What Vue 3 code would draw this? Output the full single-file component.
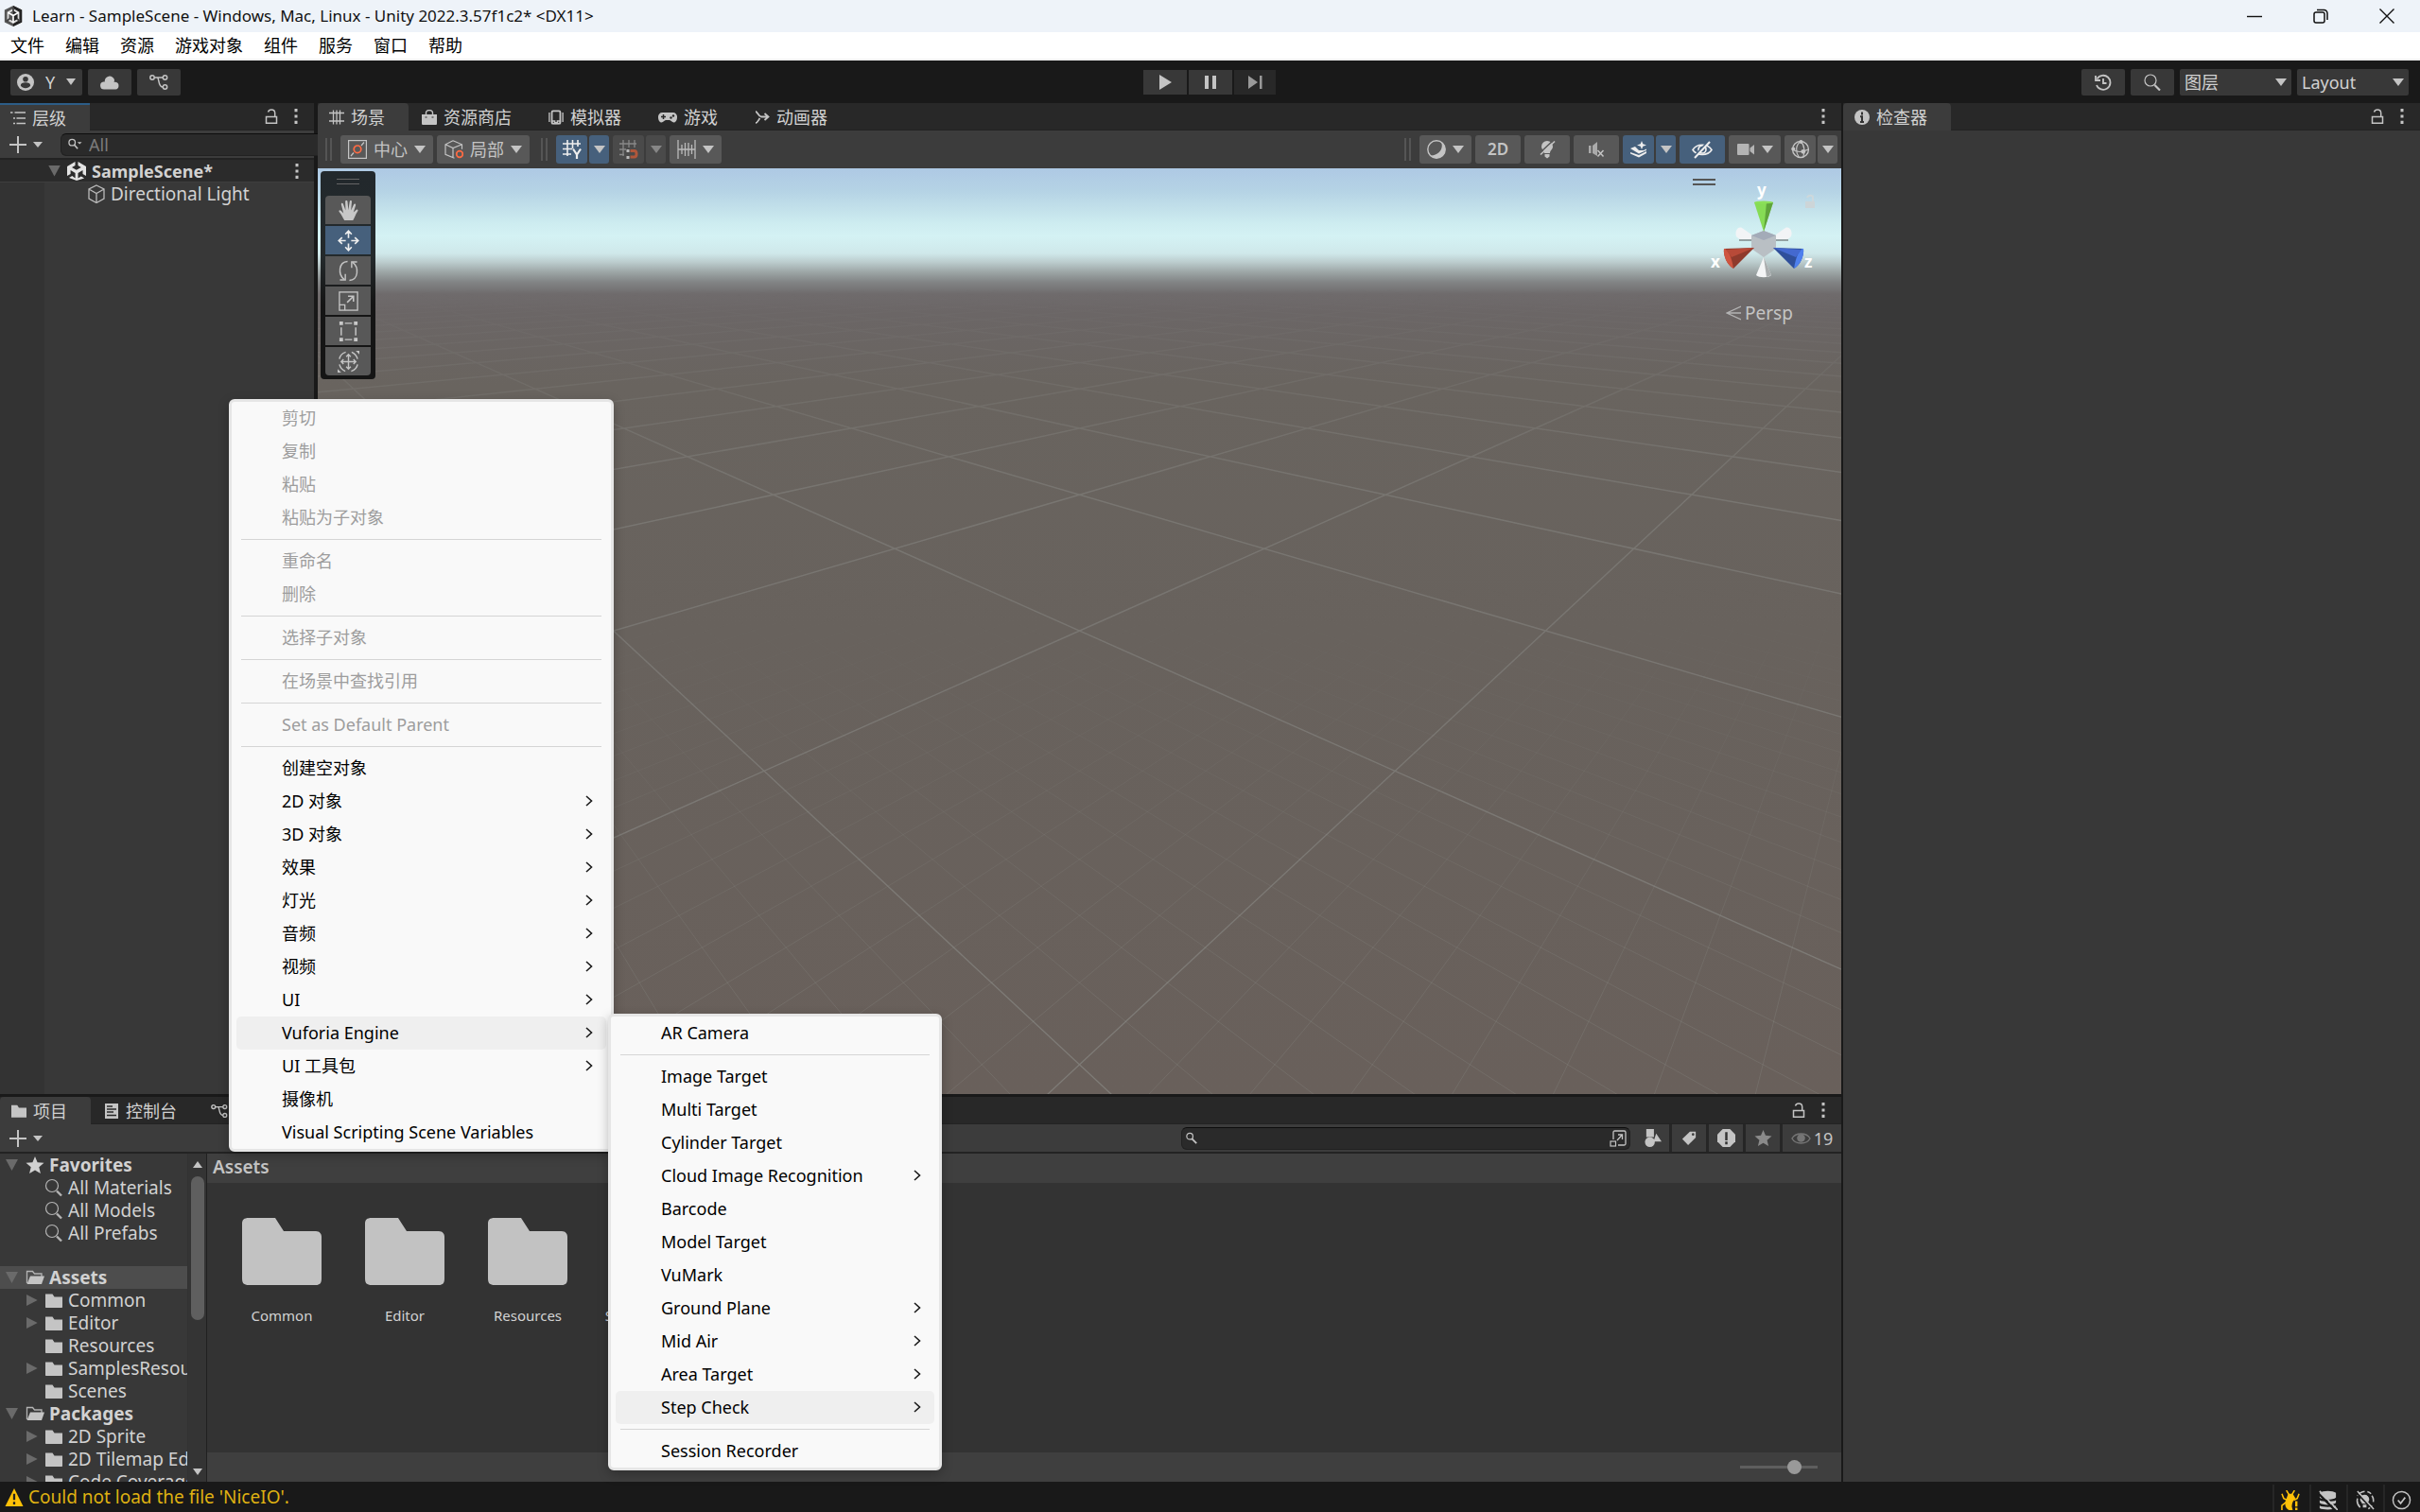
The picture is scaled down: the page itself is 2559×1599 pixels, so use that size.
<template>
  <div class="editor">
    <header class="titlebar">
      <svg class="logo" viewBox="0 0 20 24" v-html="icons.unityBadge"></svg>
      <h1>Learn - SampleScene - Windows, Mac, Linux - Unity 2022.3.57f1c2* &lt;DX11&gt;</h1>
      <div class="window-buttons">
        <button v-for="b in windowButtons" :key="b.icon" type="button" :aria-label="b.label">
          <svg viewBox="0 0 16 16" v-html="icons[b.icon]"></svg>
        </button>
      </div>
    </header>

    <nav class="menubar">
      <button v-for="m in mainMenu" :key="m" type="button">{{ m }}</button>
    </nav>

    <div class="app-toolbar">
      <div class="group">
        <button type="button" class="dark-btn account">
          <svg viewBox="0 0 18 18" v-html="icons.account"></svg>
          <span>Y</span>
          <i class="caret"></i>
        </button>
        <button type="button" class="dark-btn" aria-label="Cloud">
          <svg class="wide" viewBox="0 0 20 16" v-html="icons.cloud"></svg>
        </button>
        <button type="button" class="dark-btn" aria-label="Version control">
          <svg class="wide" viewBox="0 0 20 18" v-html="icons.branch"></svg>
        </button>
      </div>
      <div class="group play">
        <button type="button" aria-label="Play"><svg viewBox="0 0 16 16" v-html="icons.play"></svg></button>
        <button type="button" aria-label="Pause"><svg viewBox="0 0 16 16" v-html="icons.pause"></svg></button>
        <button type="button" class="off" aria-label="Step"><svg viewBox="0 0 16 16" v-html="icons.step"></svg></button>
      </div>
      <div class="group right">
        <button type="button" class="dark-btn" aria-label="History">
          <svg viewBox="0 0 18 18" v-html="icons.history"></svg>
        </button>
        <button type="button" class="dark-btn" aria-label="Search">
          <svg viewBox="0 0 18 18" v-html="icons.search"></svg>
        </button>
        <label class="select">
          <select aria-label="Layers"><option>图层</option></select>
          <i class="caret"></i>
        </label>
        <label class="select">
          <select aria-label="Layout"><option>Layout</option></select>
          <i class="caret"></i>
        </label>
      </div>
    </div>

    <main class="docks">
      <div class="workspace">
        <div class="upper">
          <section class="panel hierarchy">
            <div class="tabs">
              <button type="button" class="tab active focused">
                <svg viewBox="0 0 16 16" v-html="icons.list"></svg>层级
              </button>
              <span class="spacer"></span>
              <svg class="lock" viewBox="0 0 14 16" v-html="icons.lock"></svg>
              <svg class="dots" viewBox="0 0 4 16" v-html="icons.dots"></svg>
            </div>
            <div class="bar">
              <button type="button" class="add" aria-label="Create">
                <svg viewBox="0 0 18 18" v-html="icons.plus"></svg><i class="caret small"></i>
              </button>
              <div class="search">
                <svg viewBox="0 0 16 16" v-html="icons.searchMenu"></svg>
                <input type="text" placeholder="All" aria-label="Search hierarchy" />
                <svg class="popout" viewBox="0 0 18 18" v-html="icons.popout"></svg>
              </div>
            </div>
            <div class="scene-row">
              <i class="fold open"></i>
              <svg viewBox="0 0 20 20" v-html="icons.unity"></svg>
              <strong>SampleScene*</strong>
              <span class="spacer"></span>
              <svg class="dots" viewBox="0 0 4 16" v-html="icons.dots"></svg>
            </div>
            <div class="objects">
              <div class="object-row">
                <svg viewBox="0 0 20 20" v-html="icons.cube"></svg>Directional Light
              </div>
            </div>
          </section>

          <section class="panel scene">
            <div class="tabs">
              <button
                v-for="t in sceneTabs"
                :key="t.label"
                type="button"
                class="tab"
                :class="{ active: t.active }"
              >
                <svg :class="{ wide: t.wide }" :viewBox="t.box || '0 0 16 16'" v-html="icons[t.icon]"></svg>{{ t.label }}
              </button>
              <span class="spacer"></span>
              <svg class="dots" viewBox="0 0 4 16" v-html="icons.dots"></svg>
            </div>

            <div class="scene-bar">
              <i class="grip"></i>
              <button type="button" class="btn">
                <svg viewBox="0 0 20 20" v-html="icons.pivot"></svg>中心<i class="caret"></i>
              </button>
              <button type="button" class="btn">
                <svg viewBox="0 0 20 20" v-html="icons.local"></svg>局部<i class="caret"></i>
              </button>
              <i class="grip second"></i>
              <div class="split on">
                <button type="button" aria-label="Grid"><svg viewBox="0 0 20 20" v-html="icons.gridY"></svg></button>
                <button type="button" class="drop" aria-label="Grid options"><i class="caret"></i></button>
              </div>
              <div class="split disabled">
                <button type="button" aria-label="Snap"><svg viewBox="0 0 20 20" v-html="icons.snap"></svg></button>
                <button type="button" class="drop" aria-label="Snap options"><i class="caret"></i></button>
              </div>
              <button type="button" class="btn" aria-label="Increment">
                <svg viewBox="0 0 20 20" v-html="icons.ruler"></svg><i class="caret"></i>
              </button>
              <span class="spacer"></span>
              <i class="grip"></i>
              <button type="button" class="btn" aria-label="Shading">
                <svg viewBox="0 0 20 20" v-html="icons.shading"></svg><i class="caret"></i>
              </button>
              <button type="button" class="btn toggle two-d">2D</button>
              <button type="button" class="btn toggle" aria-label="Lighting">
                <svg viewBox="0 0 20 20" v-html="icons.bulb"></svg>
              </button>
              <button type="button" class="btn toggle" aria-label="Audio">
                <svg viewBox="0 0 20 20" v-html="icons.audio"></svg>
              </button>
              <div class="split on">
                <button type="button" aria-label="Effects"><svg viewBox="0 0 20 20" v-html="icons.effects"></svg></button>
                <button type="button" class="drop" aria-label="Effect options"><i class="caret"></i></button>
              </div>
              <button type="button" class="btn toggle on" aria-label="Visibility">
                <svg class="eye" viewBox="0 0 22 20" v-html="icons.eyeOff"></svg>
              </button>
              <button type="button" class="btn" aria-label="Camera">
                <svg viewBox="0 0 20 20" v-html="icons.camera"></svg><i class="caret"></i>
              </button>
              <div class="split">
                <button type="button" aria-label="Gizmos"><svg viewBox="0 0 22 22" v-html="icons.gizmo"></svg></button>
                <button type="button" class="drop" aria-label="Gizmo options"><i class="caret"></i></button>
              </div>
            </div>

            <div class="viewport">
              <svg class="floor" viewBox="0 0 1611 979" preserveAspectRatio="xMidYMid slice">
                <defs>
                  <linearGradient id="far" x1="0" y1="0" x2="0" y2="1">
                    <stop offset="0.13" stop-color="#000" />
                    <stop offset="0.22" stop-color="#666" />
                    <stop offset="0.36" stop-color="#fff" />
                  </linearGradient>
                  <linearGradient id="near" x1="0" y1="0" x2="0" y2="1">
                    <stop offset="0.45" stop-color="#000" />
                    <stop offset="0.9" stop-color="#fff" />
                  </linearGradient>
                  <mask id="fade-far"><rect width="1611" height="979" fill="url(#far)" /></mask>
                  <mask id="fade-near"><rect width="1611" height="979" fill="url(#near)" /></mask>
                </defs>
                <path class="major" :d="majorGrid" mask="url(#fade-far)" />
                <path class="minor" :d="minorGrid" mask="url(#fade-near)" />
              </svg>

              <div class="tools">
                <i class="handle"></i>
                <button
                  v-for="t in tools"
                  :key="t"
                  type="button"
                  :class="{ on: t === 'move' }"
                  :aria-label="t"
                >
                  <svg viewBox="0 0 24 24" v-html="icons[t]"></svg>
                </button>
              </div>

              <div class="orientation">
                <i class="handle"></i>
                <svg viewBox="0 0 140 120" v-html="icons.axes"></svg>
                <p>
                  <svg viewBox="0 0 16 16" v-html="icons.persp"></svg>Persp
                </p>
              </div>
            </div>
          </section>
        </div>

        <section class="panel project">
          <div class="tabs">
            <button type="button" class="tab active">
              <svg viewBox="0 0 18 16" v-html="icons.folder"></svg>项目
            </button>
            <button type="button" class="tab">
              <svg viewBox="0 0 16 16" v-html="icons.console"></svg>控制台
            </button>
            <button type="button" class="tab graph" aria-label="Graph">
              <svg class="wide" viewBox="0 0 20 18" v-html="icons.branch"></svg>
            </button>
            <span class="spacer"></span>
            <svg class="lock" viewBox="0 0 14 16" v-html="icons.lock"></svg>
            <svg class="dots" viewBox="0 0 4 16" v-html="icons.dots"></svg>
          </div>
          <div class="bar">
            <button type="button" class="add" aria-label="Create">
              <svg viewBox="0 0 18 18" v-html="icons.plus"></svg><i class="caret small"></i>
            </button>
            <span class="spacer"></span>
            <div class="search asset-search">
              <svg viewBox="0 0 16 16" v-html="icons.searchSmall"></svg>
              <input type="text" aria-label="Search assets" />
              <svg class="popout" viewBox="0 0 18 18" v-html="icons.popout"></svg>
            </div>
            <div class="filters">
              <button v-for="f in filters" :key="f" type="button" :class="{ dim: f === 'star' }" :aria-label="f">
                <svg viewBox="0 0 20 20" v-html="icons[f]"></svg>
              </button>
              <button type="button" class="hidden-count">
                <svg viewBox="0 0 22 16" v-html="icons.eye"></svg>19
              </button>
            </div>
          </div>

          <div class="browser">
            <ul class="tree">
              <li
                v-for="(n, i) in tree"
                :key="i"
                :class="{ child: n.child, selected: n.selected, gap: n.gap }"
              >
                <i class="fold" :class="n.fold"></i>
                <svg viewBox="0 0 20 20" v-html="icons[n.icon]"></svg>
                <span>{{ n.name }}</span>
              </li>
            </ul>
            <div class="scrollbar">
              <i class="up"></i>
              <i class="thumb"></i>
              <i class="down"></i>
            </div>
            <div class="assets">
              <div class="crumb">Assets</div>
              <div class="tiles">
                <figure v-for="f in folders" :key="f">
                  <svg viewBox="0 0 84 71" v-html="icons.bigFolder"></svg>
                  <figcaption>{{ f }}</figcaption>
                </figure>
              </div>
              <div class="zoom">
                <input type="range" min="0" max="100" value="74" aria-label="Icon size" />
              </div>
            </div>
          </div>
        </section>
      </div>

      <section class="panel inspector">
        <div class="tabs">
          <button type="button" class="tab active">
            <svg viewBox="0 0 16 16" v-html="icons.info"></svg>检查器
          </button>
          <span class="spacer"></span>
          <svg class="lock" viewBox="0 0 14 16" v-html="icons.lock"></svg>
          <svg class="dots" viewBox="0 0 4 16" v-html="icons.dots"></svg>
        </div>
      </section>
    </main>

    <footer class="status">
      <svg class="warn" viewBox="0 0 20 20" v-html="icons.warning"></svg>
      <span>Could not load the file 'NiceIO'.</span>
      <div class="status-icons">
        <button v-for="s in statusIcons" :key="s" type="button" :aria-label="s">
          <svg viewBox="0 0 22 22" v-html="icons[s]"></svg>
        </button>
      </div>
    </footer>

    <div class="menu context">
      <template v-for="(m, i) in contextMenu" :key="i">
        <hr v-if="m === '-'" />
        <button v-else type="button" :disabled="m.disabled" :class="{ hover: m.hover }">
          {{ m.label }}
          <svg v-if="m.sub" viewBox="0 0 8 12" v-html="icons.chevron"></svg>
        </button>
      </template>
    </div>

    <div class="menu submenu">
      <template v-for="(m, i) in vuforiaMenu" :key="i">
        <hr v-if="m === '-'" />
        <button v-else type="button" :class="{ hover: m.hover }">
          {{ m.label }}
          <svg v-if="m.sub" viewBox="0 0 8 12" v-html="icons.chevron"></svg>
        </button>
      </template>
    </div>
  </div>
</template>

<script setup>
const icons = {
  unityBadge:
    '<path d="M10 0 20 5v14l-10 5L0 19V5z" fill="#555"/><path d="M10 0 20 5v14l-10 5z" fill="#222"/><path d="M10 4.500 16 8v8l-6 3.500L4 16V8z" fill="none" stroke="#ddd" stroke-width="2"/><path d="M4 8l6 3.500L16 8M10 11.500v8" stroke="#fff" stroke-width="1.800" fill="none"/><path d="M10 2v5M2 18l4-3M18 18l-4-3" stroke="#444" stroke-width="2"/>',
  minimize: '<path d="M0 8.500h16" stroke="#111" stroke-width="1.400"/>',
  restore:
    '<rect x="1" y="4" width="11" height="11" rx="2" fill="none" stroke="#111" stroke-width="1.500"/><path d="M4 1.500h7.500a3.500 3.500 0 0 1 3.500 3.500v7" fill="none" stroke="#111" stroke-width="1.500"/>',
  close: '<path d="M.5.5l15 15M15.500.5l-15 15" stroke="#111" stroke-width="1.400"/>',
  account:
    '<circle cx="9" cy="9" r="9" fill="#c4c4c4"/><circle cx="9" cy="5.800" r="2.800" fill="#383838"/><path d="M3.800 12.500c0-2.500 2-3.200 5.200-3.200s5.200.7 5.200 3.200c-1.200 1.800-3 2.800-5.200 2.800s-4-1-5.200-2.800z" fill="#383838"/>',
  cloud:
    '<path d="M4 15.500a4 4 0 0 1-.8-7.900h1.600A5.200 5.200 0 0 1 15 5.600c0 .9-.2 1.600-.5 2.200h1.700a3.900 3.900 0 0 1 0 7.700z" fill="#c4c4c4"/>',
  branch:
    '<g fill="none" stroke="#c4c4c4" stroke-width="1.500"><circle cx="3" cy="4" r="2.200"/><circle cx="16.500" cy="4" r="2.200"/><circle cx="16.500" cy="14" r="2.200"/><path d="M5.200 4h9M8.500 4c2 1 .5 10 5.800 10"/></g>',
  play: '<path d="M2 0v16l13-8z" fill="#c4c4c4"/>',
  pause: '<path d="M2 1h4v14H2zM10 1h4v14h-4z" fill="#c4c4c4"/>',
  step: '<path d="M1 1v14l10-7zM13 1h2.500v14H13z" fill="#999"/>',
  history:
    '<path d="M2.500 5.500A7.500 7.500 0 1 1 2 12" fill="none" stroke="#c4c4c4" stroke-width="1.800"/><path d="M1 2v5h5" fill="none" stroke="#c4c4c4" stroke-width="1.800"/><path d="M9 5v5h3.500" fill="none" stroke="#c4c4c4" stroke-width="1.800"/>',
  search:
    '<circle cx="7" cy="7" r="6" fill="none" stroke="#c4c4c4" stroke-width="1.200"/><path d="M11.500 12l5.500 5.500" stroke="#c4c4c4" stroke-width="2.200"/>',
  searchSmall:
    '<circle cx="5.500" cy="6" r="3.500" fill="none" stroke="#c4c4c4" stroke-width="1.300"/><path d="M8 9l5 5" stroke="#c4c4c4" stroke-width="2"/>',
  searchMenu:
    '<circle cx="4.500" cy="6" r="3.500" fill="none" stroke="#c4c4c4" stroke-width="1.400"/><path d="M6.800 8.500l4 4.500" stroke="#c4c4c4" stroke-width="1.700"/><path d="M10.500 5.500h5l-2.500 2.600z" fill="#c4c4c4"/>',
  popout:
    '<path d="M4 10V2.500C4 1.500 4.500 1 5.500 1h10c1 0 1.500.5 1.500 1.500v12c0 1-.5 1.500-1.500 1.500H9" fill="none" stroke="#c4c4c4" stroke-width="1.300"/><rect x="1" y="12" width="5.500" height="5" fill="none" stroke="#c4c4c4" stroke-width="1.200"/><path d="M8 11l5-5.500M9 5h4.500v5" fill="none" stroke="#c4c4c4" stroke-width="1.300"/>',
  list: '<path d="M0 2h2.500M4.500 2H16M3 8h2M6.500 8H16M3 13.500h2M6.500 13.500H16" stroke="#c4c4c4" stroke-width="1.500"/>',
  lock: '<path d="M1.500 8.500h11v6.700h-11z" fill="none" stroke="#c4c4c4" stroke-width="1.500"/><path d="M3.500 3.500C4 1.700 5.200 1 7 1c2.400 0 3.700 1.200 3.700 3.500v4" fill="none" stroke="#c4c4c4" stroke-width="1.500"/>',
  dots: '<path d="M.5 0h3v3.200h-3zM.5 6.400h3v3.200h-3zM.5 12.800h3V16h-3z" fill="#c4c4c4"/>',
  plus: '<path d="M9 0v18M0 9h18" stroke="#c4c4c4" stroke-width="2"/>',
  unity:
    '<path d="M8.500 0v4L5 6l4.800 2.800L14.800 6 11.500 4V0L20 5v10l-3.500-2V9l-5 3v5.500l3.300-2 3.300 2L10 20l-8-3 3.300-2 3.300 2.500V12l-5-3v4L0 15V5z" fill="#e4e4e4"/>',
  cube: '<path d="M10 1l8 4v10l-8 4.500L2 15V5zM2 5l8 4.500L18 5M10 9.500v10" fill="none" stroke="#bbb" stroke-width="1.300"/>',
  hash: '<path d="M4.500.5v15M11.500.5v15M8 .5v15M0 3.500h16M0 12h16" stroke="#c4c4c4" stroke-width="1.300"/>',
  bag: '<path d="M0 5h16v9.500c0 1-.5 1.500-1.500 1.500h-13C.5 16 0 15.500 0 14.500z" fill="#c4c4c4"/><path d="M4.500 8V3.500C4.500 1.500 6 .6 8 .6s3.500.9 3.500 2.900V8" fill="none" stroke="#c4c4c4" stroke-width="1.400"/><path d="M3.500 8h2M10.500 8h2" stroke="#282828" stroke-width="1"/>',
  phone:
    '<rect x="5" y="1" width="10" height="15" rx="1.500" fill="none" stroke="#c4c4c4" stroke-width="2"/><path d="M5 13h3.500v2h3v-2H15v3H5zM2 3v11M18 3v11" stroke="#c4c4c4" stroke-width="1.500" fill="none"/>',
  pad: '<path d="M4.500 3h11A4.500 4.500 0 0 1 20 8c0 3-1.500 5.500-3.500 5.500S13.500 11 12 11H8c-1.500 0-2.500 2.500-4.500 2.500S0 11 0 8a4.500 4.500 0 0 1 4.500-5z" fill="#c4c4c4"/><path d="M5.500 5v5M3 7.500h5" stroke="#282828" stroke-width="1.500"/><circle cx="13.500" cy="8.500" r="1.200" fill="#282828"/><circle cx="16" cy="6.500" r="1.200" fill="#282828"/>',
  animator:
    '<path d="M1 2c2 0 3 5.500 6 5.500h7M1 14c2 0 3-3 4.500-5M10.500 4l4 3.500-4 3.500" fill="none" stroke="#c4c4c4" stroke-width="1.800"/>',
  pivot:
    '<rect x=".6" y=".6" width="18.800" height="18.800" fill="none" stroke="#c4c4c4" stroke-width="1.200"/><path d="M3 17l3-3.500M14 6l3-3.500" stroke="#c4c4c4" stroke-width="1.200"/><circle cx="10" cy="9.800" r="3.800" fill="none" stroke="#ff6b43" stroke-width="1.700"/>',
  local:
    '<path d="M9 .8l9.500 4v5M18.500 4.800L9 8.500 1 4.800M9 .8L1 4.800v10.500l9.500 4M9 8.500v10" fill="none" stroke="#c4c4c4" stroke-width="1.200"/><circle cx="16" cy="15" r="3.300" fill="none" stroke="#ff6b43" stroke-width="1.700"/>',
  gridY:
    '<path d="M5 0v17M10.500 0v9M16 0v7M0 4h19M0 9.500h10M0 15h9" stroke="#eee" stroke-width="1.600"/><path d="M11 9.500l4 6 4-6M15 15v5.500" fill="none" stroke="#eee" stroke-width="2.200"/>',
  snap: '<path d="M4 0v17M10 0v8M16 0v8M0 4h18M0 10h7M0 15.500h5" stroke="#888" stroke-width="1.300"/><path d="M11.500 11.500h4.300c3 0 3 6.500 0 6.500h-4.300" fill="none" stroke="#b0573b" stroke-width="3"/><path d="M7.500 10h3v3h-3zM7.500 17h3v3h-3z" fill="#bbb"/>',
  ruler:
    '<path d="M1 0v20M5 5v10M8.500 3v14M12 3v14M15.500 5v10M19 0v20M1 10h18" stroke="#bbb" stroke-width="1.300"/>',
  shading:
    '<circle cx="10" cy="10" r="9.200" fill="none" stroke="#c4c4c4" stroke-width="1.400"/><path d="M15 2.500C18 9 12 17 3.500 16.500A9.300 9.300 0 0 0 19.300 10 9.300 9.300 0 0 0 15 2.500z" fill="#c4c4c4"/>',
  bulb: '<path d="M10 1a6 6 0 0 1 6 6c0 3-3 4-3 7H7c0-3-3-4-3-7a6 6 0 0 1 6-6zM7.500 15h5v2.500L10 19.500l-2.500-2z" fill="#c4c4c4"/><path d="M2 14L17 0" stroke="#585858" stroke-width="1.600"/><path d="M3 15.500L18 1.500" stroke="#c4c4c4" stroke-width="1.600"/>',
  audio:
    '<path d="M2 6h2.500v8H2zM6 6l5-4v15l-5-3z" fill="#aaa"/><path d="M11.500 11l6 6.500M17.500 11l-6 6.500" stroke="#c4c4c4" stroke-width="1.500"/>',
  effects:
    '<path d="M13 1l1.300 3.200L18 5.500l-3.700 1.300L13 10l-1.300-3.200L8 5.500l3.700-1.300zM1 9l5-2 4 4 5 0 3-1.500v1.500l-8 3.500zM1 13l9 3 8-4v2l-8 4.500-9-4z" fill="#eee"/>',
  eyeOff:
    '<path d="M1 10.500C5 3.500 17 3.500 21 10.500 17 17 5 17 1 10.500z" fill="none" stroke="#eee" stroke-width="1.600"/><circle cx="11" cy="10" r="4" fill="none" stroke="#eee" stroke-width="1.700"/><path d="M2 18L18 1" stroke="#46607c" stroke-width="2"/><path d="M3 19L19 2" stroke="#eee" stroke-width="2"/>',
  camera: '<rect x="1" y="4" width="12.500" height="12" rx="1" fill="#b4b4b4"/><path d="M14.500 8.500L19 5v10.500l-4.500-3.500z" fill="#b4b4b4"/>',
  gizmo:
    '<circle cx="11" cy="11" r="9.300" fill="none" stroke="#c4c4c4" stroke-width="1.500"/><path d="M11 2c5 4 5 12 3 18M11 2C5 6 5 14 9 20M2 11c5 4 12 3 18 0" fill="none" stroke="#c4c4c4" stroke-width="1.300"/><circle cx="11.500" cy="2.200" r="2.200" fill="#c4c4c4"/><circle cx="2.500" cy="10.500" r="2.200" fill="#c4c4c4"/><circle cx="14" cy="13.500" r="2.600" fill="#c4c4c4"/>',
  hand: '<path d="M7.500 23c-2-3.500-3-6-5.800-9.500-.8-1.600.8-2.500 2-1.300L6.500 15 4 5.500c-.4-1.800 1.700-2.300 2.200-.6L8.800 12 8.500 2.500c0-1.900 2.300-1.900 2.500 0l.8 9.300 1.500-9.500c.3-1.800 2.500-1.500 2.300.3L14.800 12l3-6.500c.7-1.600 2.600-.8 2.100.9L17.500 14l3-2.600c1.400-1 2.600.3 1.600 1.600C19.500 16.500 19 20 17 23z" fill="#c8c8c8"/>',
  move: '<path d="M12 2v7M12 15v7M2 12h7M15 12h7M8.500 5L12 1.300 15.500 5M8.500 19l3.500 3.700 3.500-3.700M5 8.500L1.300 12 5 15.500M19 8.500l3.700 3.500-3.700 3.500" fill="none" stroke="#eee" stroke-width="1.700"/>',
  rotate:
    '<path d="M11 1.500C1 2 0 16 7.500 21.500M13 22.500c10-.5 11-14.500 3.500-20" fill="none" stroke="#c4c4c4" stroke-width="1.500"/><path d="M2.500 22h6v-6.500M21.500 2h-6v6.500" fill="none" stroke="#c4c4c4" stroke-width="1.500"/>',
  scale:
    '<rect x="2" y="2" width="20" height="20" fill="none" stroke="#c4c4c4" stroke-width="1.400"/><path d="M2 16h6v6" fill="none" stroke="#c4c4c4" stroke-width="1.400"/><path d="M10.500 13.500L17 7M11.500 6.500h6v6" fill="none" stroke="#c4c4c4" stroke-width="1.700"/>',
  rect: '<path d="M2 1h4v4H2zM18 1h4v4h-4zM2 19h4v4H2zM18 19h4v4h-4z" fill="#c8c8c8"/><path d="M8 3h8M8 21h8M4 7.500v9M20 7.500v9" stroke="#c8c8c8" stroke-width="1.500"/>',
  transform:
    '<path d="M12 4v16M4 12h16M9.500 6.500L12 4l2.500 2.500M9.500 17.500L12 20l2.500-2.500M6.500 9.500L4 12l2.500 2.500M17.500 9.500L20 12l-2.500 2.500M9 1.500C4.500 3 2.500 6 2 9M15 22.500c4.500-1.500 6.500-4.500 7-7.500M2 15c.8 3.500 3 6 6.500 7.500M22 9c-1-3.500-3-6-6.500-7.500" fill="none" stroke="#c4c4c4" stroke-width="1.500"/><path d="M20 0h4v4zM0 20v4h4z" fill="#c4c4c4"/>',
  persp: '<path d="M16 1L1 8l15 7M1 8h15" fill="none" stroke="#b4b4b4" stroke-width="1.300"/>',
  axes:
    '<g transform="translate(66 62)">' +
    '<path d="M-13-5v-5l-10-7c-4-2-8 3-6 9 2 2 3 3 5 3z" fill="#f2f4f6"/><path d="M-26-4h13" stroke="#555" stroke-width="1"/>' +
    '<path d="M13-5v-5l10-7c4-2 8 3 6 9-2 2-3 3-5 3z" fill="#f2f4f6"/><path d="M26-4H13" stroke="#555" stroke-width="1"/>' +
    '<path d="M0-14l13 5v14L0 14l-13-9V-9z" fill="#b9bfc4"/><path d="M0-14l13 5L0-4l-13-5z" fill="#a3abb8"/>' +
    '<path d="M-10-44h20L0-13z" fill="#86dc55"/><path d="M3-44h7L0-13z" fill="#5fa43b"/><ellipse cy="-44" rx="10" ry="1.500" fill="#8ce05a"/>' +
    '<path d="M0 14l8 19c-3 3-13 3-16 0z" fill="#f4f5f6"/><path d="M0 14l8 19-5 2z" fill="#a9adae"/>' +
    '<path d="M-10 4l-32 1c-1 8 4 18 10 21z" fill="#8f3a2c"/><path d="M-42 5c3-1 8 7 10 21-7-4-11-14-10-21z" fill="#cf5540"/><path d="M-10 4l-30 2 6 8z" fill="#b84a38"/>' +
    '<path d="M10 4l32 1c1 8-4 18-10 21z" fill="#2f4f9a"/><path d="M42 5c-3-1-8 7-10 21 7-4 11-14 10-21z" fill="#4f80ee"/><path d="M10 4l30 2-6 8z" fill="#4469cf"/>' +
    '</g>' +
    '<g fill="#fff" font-size="17" font-weight="700"><text x="59" y="11">y</text><text x="10" y="87">x</text><text x="109" y="87">z</text></g>' +
    '<path d="M110 17h10v7h-10z" fill="#cdd5d8"/><path d="M112 13c1-3 6-3 6 0v4" fill="none" stroke="#cdd8dc" stroke-width="2"/>',
  folder: '<path d="M0 1h7l2 3h9v11.500H0z" fill="#c4c4c4"/>',
  console:
    '<rect x="1" y="0" width="14" height="16" fill="#c4c4c4"/><path d="M3 3h6M3 6h10M3 9h7M3 12.500h10" stroke="#282828" stroke-width="1.300"/>',
  types: '<path d="M3 0h8.500v9H3zM14 5l6 9h-9z" fill="#c4c4c4"/><circle cx="7" cy="14.500" r="5.500" fill="#c4c4c4"/>',
  tag: '<path d="M2 11L10.500 3H17v6.500L8.500 18z" fill="#c4c4c4"/><circle cx="14" cy="6" r="1.400" fill="#3c3c3c"/>',
  alert:
    '<path d="M6 0h8l6 6v8l-6 6H6l-6-6V6z" fill="#c4c4c4"/><path d="M10 3.500v9M10 14v3" stroke="#333" stroke-width="2.600"/>',
  star: '<path d="M10 1l2.600 6.200 6.900.6-5.200 4.500 1.600 6.700-5.900-3.600L4.100 19l1.600-6.700L.5 7.800l6.900-.6z" fill="currentColor"/>',
  eye: '<path d="M1 8C5 1 17 1 21 8 17 15 5 15 1 8z" fill="none" stroke="#757575" stroke-width="1.500"/><circle cx="11" cy="7.500" r="4.500" fill="#757575"/>',
  treeSearch:
    '<circle cx="8" cy="8" r="6.500" fill="none" stroke="#b4b4b4" stroke-width="1.200"/><path d="M13 13.500l5 5" stroke="#b4b4b4" stroke-width="2.400"/>',
  treeFolder: '<path d="M1 3.500h7.500l2 3H19V17c0 .6-.3 1-1 1H2c-.7 0-1-.4-1-1z" fill="#c4c4c4"/>',
  treeOpen:
    '<path d="M1.500 16V3.500h6l2 2.500H17v3" fill="none" stroke="#b4b4b4" stroke-width="1.300"/><path d="M1.500 17L5 8.500h15L17 17z" fill="#c4c4c4"/>',
  bigFolder:
    '<path d="M7 0h28l9 14h34c4 0 6 3 6 6v44c0 5-2 7-6 7H7c-5 0-7-2-7-7V6c0-4 2-6 7-6z" fill="#c2c2c2"/>',
  info: '<circle cx="8" cy="8" r="8" fill="#c4c4c4"/><path d="M8 2.500v3M8 7v6M6 7.200h3M6 13h4" stroke="#333" stroke-width="2"/>',
  warning:
    '<path d="M10 0l10 20H0z" fill="#ffc107"/><path d="M10 6v7M10 15v2.800" stroke="#222" stroke-width="2.400"/>',
  bug: '<g fill="none" stroke="#ffc107" stroke-width="1.600"><path d="M6 0l3 5M15 0l-3 5M1 4l2 5 4 2M20 4l-2 5-4 2M1 22v-5l5-4"/></g><path d="M8 4h5l3 5c-2 2-4 5-4 9l1 4H9c-4-2-5-6-4-10z" fill="#ffc107"/><path d="M17 12v6M17 19.500v2.500" stroke="#ffc107" stroke-width="2.500"/>',
  cacheOff:
    '<path d="M2 3c3-3 15-3 18 0v5c-3 3-15 3-18 0zM2 11c3 2 15 2 18 0v3c-3 3-15 3-18 0zM2 17c3 2 15 2 18 0v3c-3 2-15 2-18 0z" fill="#c4c4c4"/><path d="M0 3l20 20" stroke="#191919" stroke-width="2.500"/><path d="M2 1l20 21" stroke="#c4c4c4" stroke-width="1.800"/>',
  lightOff:
    '<path d="M11 5a5 5 0 0 1 5 5c0 3-2 3-2 5H8c0-2-2-2-2-5a5 5 0 0 1 5-5zM9 16h4v3H9z" fill="#c4c4c4"/><path d="M3 6C5 3 7 1.500 11 1.200M19 6c1.500 2 2 4 1.500 7M3 9c-1 4 0 7 3 10M19 17c-1 1.500-2 2.500-4 3.500M14 1.500c2 .5 3 1.200 4 2.500" fill="none" stroke="#c4c4c4" stroke-width="1.600"/><path d="M1 2l19 19" stroke="#191919" stroke-width="2"/><path d="M3 1l18 20" stroke="#c4c4c4" stroke-width="1.600"/>',
  done: '<circle cx="11" cy="11" r="9.500" fill="none" stroke="#c4c4c4" stroke-width="1.500"/><path d="M7 11l3 3.500L15 8" fill="none" stroke="#c4c4c4" stroke-width="1.800"/>',
  chevron: '<path d="M1 1l5.500 5L1 11" fill="none" stroke="#1a1a1a" stroke-width="1.600"/>',
}

const windowButtons = [
  { icon: 'minimize', label: 'Minimize' },
  { icon: 'restore', label: 'Restore' },
  { icon: 'close', label: 'Close' },
]

const mainMenu = ['文件', '编辑', '资源', '游戏对象', '组件', '服务', '窗口', '帮助']

const sceneTabs = [
  { label: '场景', icon: 'hash', active: true },
  { label: '资源商店', icon: 'bag' },
  { label: '模拟器', icon: 'phone', box: '1 0 18 17' },
  { label: '游戏', icon: 'pad', wide: true, box: '0 0 20 16' },
  { label: '动画器', icon: 'animator' },
]

const tools = ['hand', 'move', 'rotate', 'scale', 'rect', 'transform']
const filters = ['types', 'tag', 'alert', 'star']
const folders = ['Common', 'Editor', 'Resources', 'SamplesRes...']
const statusIcons = ['bug', 'cacheOff', 'lightOff', 'done']

const tree = [
  { name: 'Favorites', icon: 'star', fold: 'open' },
  { name: 'All Materials', icon: 'treeSearch', child: true },
  { name: 'All Models', icon: 'treeSearch', child: true },
  { name: 'All Prefabs', icon: 'treeSearch', child: true },
  { name: 'Assets', icon: 'treeOpen', fold: 'open', selected: true, gap: true },
  { name: 'Common', icon: 'treeFolder', fold: 'closed', child: true },
  { name: 'Editor', icon: 'treeFolder', fold: 'closed', child: true },
  { name: 'Resources', icon: 'treeFolder', child: true },
  { name: 'SamplesResources', icon: 'treeFolder', fold: 'closed', child: true },
  { name: 'Scenes', icon: 'treeFolder', child: true },
  { name: 'Packages', icon: 'treeOpen', fold: 'open' },
  { name: '2D Sprite', icon: 'treeFolder', fold: 'closed', child: true },
  { name: '2D Tilemap Editor', icon: 'treeFolder', fold: 'closed', child: true },
  { name: 'Code Coverage', icon: 'treeFolder', fold: 'closed', child: true },
]

const contextMenu = [
  { label: '剪切', disabled: true },
  { label: '复制', disabled: true },
  { label: '粘贴', disabled: true },
  { label: '粘贴为子对象', disabled: true },
  '-',
  { label: '重命名', disabled: true },
  { label: '删除', disabled: true },
  '-',
  { label: '选择子对象', disabled: true },
  '-',
  { label: '在场景中查找引用', disabled: true },
  '-',
  { label: 'Set as Default Parent', disabled: true },
  '-',
  { label: '创建空对象' },
  { label: '2D 对象', sub: true },
  { label: '3D 对象', sub: true },
  { label: '效果', sub: true },
  { label: '灯光', sub: true },
  { label: '音频', sub: true },
  { label: '视频', sub: true },
  { label: 'UI', sub: true },
  { label: 'Vuforia Engine', sub: true, hover: true },
  { label: 'UI 工具包', sub: true },
  { label: '摄像机' },
  { label: 'Visual Scripting Scene Variables' },
]

const vuforiaMenu = [
  { label: 'AR Camera' },
  '-',
  { label: 'Image Target' },
  { label: 'Multi Target' },
  { label: 'Cylinder Target' },
  { label: 'Cloud Image Recognition', sub: true },
  { label: 'Barcode' },
  { label: 'Model Target' },
  { label: 'VuMark' },
  { label: 'Ground Plane', sub: true },
  { label: 'Mid Air', sub: true },
  { label: 'Area Target', sub: true },
  { label: 'Step Check', sub: true, hover: true },
  '-',
  { label: 'Session Recorder' },
]

// floor grid: both line families run to a vanishing point left and right of the view
const cx = 805.5
const horizon = 70
const vanish = 943

function gridLines(from, to, step) {
  let d = ''
  for (let k = from; k <= to; k += step) {
    const x = (2 * k + 1.025) * 1176
    d += `M${cx - vanish} ${horizon}L${cx + x} ${horizon + 2000}`
    d += `M${cx + vanish} ${horizon}L${cx - x} ${horizon + 2000}`
  }
  return d
}

const majorGrid = gridLines(0, 32, 1)
const minorGrid = gridLines(-0.9, 3, 0.1)
</script>

<style>
body {
  margin: 0;
  background: #191919;
}
</style>

<style scoped>
.editor {
  position: relative;
  display: flex;
  flex-direction: column;
  height: 100vh;
  overflow: hidden;
  background: #191919;
  color: #d2d2d2;
  font-family: 'Noto Sans', 'Noto Sans CJK SC', sans-serif;
  font-size: 18px;
  line-height: 24px;
}

.editor * {
  box-sizing: border-box;
}

button,
input,
select {
  margin: 0;
  padding: 0;
  border: 0;
  background: none;
  color: inherit;
  font: inherit;
  outline: none;
}

svg {
  display: block;
  flex: none;
  width: 18px;
  height: 18px;
}

.spacer {
  flex: 1;
}

.caret {
  flex: none;
  width: 0;
  height: 0;
  border: 6px solid transparent;
  border-top: 8px solid #c4c4c4;
  border-bottom: 0;
}

.caret.small {
  border-width: 6px 5px 0;
}

/* window chrome */
.titlebar {
  display: flex;
  align-items: center;
  height: 34px;
  padding-left: 4px;
  background: #eef3f9;
  color: #111;
}

.logo {
  width: 20px;
  height: 22px;
}

h1 {
  flex: 1;
  margin: 0 0 0 10px;
  font-size: 17px;
  font-weight: 400;
}

.window-buttons {
  display: flex;
}

.window-buttons button {
  display: grid;
  place-items: center;
  width: 70px;
  height: 34px;
}

.window-buttons svg {
  width: 16px;
  height: 16px;
}

.menubar {
  display: flex;
  gap: 22px;
  height: 30px;
  padding-left: 11px;
  border-bottom: 2px solid #f0f0f0;
  background: #fff;
  color: #000;
}

/* top toolbar */
.app-toolbar {
  display: grid;
  grid-template-columns: 1fr auto 1fr;
  align-items: center;
  height: 45px;
  padding: 0 12px 0 11px;
}

.group {
  display: flex;
  gap: 6px;
}

.group.right {
  justify-content: flex-end;
}

.group.play {
  gap: 2px;
}

.dark-btn,
.play button {
  display: flex;
  align-items: center;
  justify-content: center;
  width: 46px;
  height: 28px;
  border-radius: 2px;
  background: #383838;
}

.play button {
  height: 26px;
  border-radius: 0;
}

.play svg {
  width: 16px;
  height: 16px;
}

.play .off {
  width: 44px;
  background: #282828;
}

.account {
  gap: 12px;
  width: 76px;
}

.account .caret {
  border-width: 7px 5px 0;
}

.wide {
  width: 20px;
}

.select {
  display: flex;
  align-items: center;
  width: 118px;
  height: 28px;
  padding: 0 5px;
  border-radius: 2px;
  background: #383838;
}

.select select {
  flex: 1;
  min-width: 0;
  appearance: none;
}

/* docked panels */
.docks {
  display: grid;
  grid-template-columns: 1949fr 610fr;
  flex: 1;
  min-height: 0;
}

.workspace {
  display: flex;
  flex-direction: column;
  gap: 3px;
  min-width: 0;
  min-height: 0;
  padding-right: 2px;
}

.upper {
  display: flex;
  flex: 1;
  gap: 4px;
  min-height: 0;
}

.panel {
  display: flex;
  flex-direction: column;
  min-width: 0;
  background: #383838;
}

.hierarchy {
  width: 332px;
}

.scene {
  flex: 1;
}

.tabs {
  display: flex;
  align-items: center;
  height: 29px;
  padding-right: 17px;
  border-bottom: 1px solid #232323;
  background: #282828;
}

.tab {
  display: flex;
  align-items: center;
  gap: 7px;
  height: 29px;
  margin-right: 2px;
  padding: 1px 25px 0 12px;
  border-radius: 4px 4px 0 0;
}

.tab svg {
  width: 16px;
  height: 16px;
}

.tab svg.wide {
  width: 20px;
}

.tab.active {
  background: #3c3c3c;
}

.tab.focused {
  padding-left: 11px;
  border-top: 2px solid #2c5d87;
  border-radius: 0;
}

.tab.graph {
  padding-left: 8px;
}

.lock {
  width: 14px;
  height: 16px;
  margin-right: 17px;
}

.dots {
  width: 4px;
  height: 16px;
}

.bar {
  display: flex;
  align-items: center;
  height: 31px;
  padding: 0 0 0 10px;
  border-bottom: 2px solid #232323;
  background: #3c3c3c;
}

.add {
  display: flex;
  align-items: center;
  gap: 7px;
}

.search {
  display: flex;
  align-items: center;
  flex: 1;
  height: 24px;
  margin: 0 5px 0 19px;
  padding: 0 3px 0 7px;
  border: 1px solid #212121;
  border-top-color: #0d0d0d;
  border-radius: 6px;
  background: #2a2a2a;
}

.search svg {
  width: 15px;
  height: 15px;
}

.search input {
  flex: 1;
  min-width: 0;
  height: 22px;
  margin-left: 7px;
}

.search input::placeholder {
  color: #7c7c7c;
  opacity: 1;
}

.search .popout {
  width: 18px;
  height: 18px;
}

.scene-row {
  display: flex;
  align-items: center;
  height: 24px;
  padding: 0 16px 0 51px;
  border-bottom: 1px solid #3e3e3e;
  background: #2b2b2b;
}

.scene-row svg:not(.dots) {
  width: 20px;
  height: 20px;
  margin: 0 6px 0 7px;
}

.fold {
  flex: none;
  width: 13px;
  height: 12px;
}

.fold.open {
  background: #6a6a6a;
  clip-path: polygon(0 0, 100% 0, 50% 100%);
}

.fold.closed {
  background: #6a6a6a;
  clip-path: polygon(0 0, 90% 50%, 0 100%);
}

.objects {
  flex: 1;
  background: linear-gradient(to right, #333 47px, #383838 47px);
}

.object-row {
  display: flex;
  align-items: center;
  gap: 5px;
  height: 24px;
  padding-left: 92px;
  font-size: 19px;
}

.object-row svg {
  width: 20px;
  height: 20px;
}

/* scene view */
.scene-bar {
  display: flex;
  align-items: center;
  gap: 4px;
  height: 40px;
  padding: 0 4px 0 8px;
  background: #3c3c3c;
}

.grip {
  width: 7px;
  height: 24px;
  margin-right: 5px;
  border: solid #555;
  border-width: 0 2px;
}

.grip.second {
  margin-left: 8px;
}

.btn,
.split button {
  display: flex;
  align-items: center;
  justify-content: center;
  gap: 7px;
  height: 30px;
  padding: 0 8px;
  border-radius: 3px;
  background: #585858;
  color: #c4c4c4;
}

.btn svg,
.split svg {
  width: 20px;
  height: 20px;
}

.btn.toggle {
  width: 48px;
}

.two-d {
  font-size: 17px;
  font-weight: 600;
}

.btn .eye {
  width: 22px;
}

.split {
  display: flex;
  gap: 2px;
}

.split button {
  width: 33px;
  padding: 0;
}

.split .drop {
  width: 21px;
}

.btn.on,
.split.on button {
  background: #46607c;
}

.split.disabled button {
  background: #4a4a4a;
}

.disabled .caret {
  border-top-color: #868686;
}

.viewport {
  position: relative;
  flex: 1;
  overflow: hidden;
  background: linear-gradient(
    #aec9e4 0,
    #b5d3e5 24px,
    #c2e0ea 42px,
    #cdecf0 58px,
    #d4f2f4 72px,
    #cfe8ea 90px,
    #bccdce 99px,
    #9ca5a5 110px,
    #828586 120px,
    #6f6b6c 133px,
    #6b6666 152px,
    #69645f 230px,
    #68625d 50%,
    #69605b 100%
  );
}

.floor {
  width: 100%;
  height: 100%;
}

.major,
.minor {
  fill: none;
  stroke: #9aa09c;
  stroke-width: 1.5;
  stroke-opacity: 0.32;
}

.minor {
  stroke-width: 1;
  stroke-opacity: 0.2;
}

.tools {
  position: absolute;
  top: 3px;
  left: 3px;
  display: flex;
  flex-direction: column;
  align-items: center;
  gap: 2px;
  width: 58px;
  padding: 8px 0 4px;
  border-radius: 4px;
  background: linear-gradient(#22282c, #242a2c 90px, #151515 140px);
}

.handle {
  width: 24px;
  height: 6px;
  border: solid #666;
  border-width: 1px 0;
}

.tools .handle {
  margin-bottom: 10px;
}

.tools button {
  display: grid;
  place-items: center;
  width: 48px;
  height: 30px;
  background: #585858;
}

.tools button.on {
  background: #46607c;
}

.tools svg {
  width: 23px;
  height: 23px;
}

.tools button:first-of-type {
  border-radius: 4px 4px 0 0;
}

.tools button:last-of-type {
  border-radius: 0 0 4px 4px;
}

.orientation {
  position: absolute;
  top: 11px;
  right: 9px;
  width: 148px;
}

.orientation .handle {
  display: block;
  height: 7px;
  border-color: #555;
  border-width: 2px 0;
}

.orientation > svg {
  width: 140px;
  height: 120px;
  margin-left: 9px;
  overflow: visible;
}

.orientation p {
  display: flex;
  align-items: center;
  gap: 4px;
  margin: 3px 0 0 35px;
  color: #c4c4c4;
  font-size: 19px;
}

.orientation p svg {
  width: 16px;
  height: 16px;
}

/* project browser */
.project {
  flex: none;
  height: 407px;
}

.asset-search {
  flex: none;
  width: 475px;
  margin: 0 5px 0 0;
  padding-left: 3px;
}

.filters {
  display: flex;
  gap: 3px;
  height: 29px;
  background: #262626;
}

.filters button {
  display: flex;
  align-items: center;
  justify-content: center;
  width: 36px;
  background: #3c3c3c;
}

.filters svg {
  width: 19px;
  height: 19px;
}

.filters .dim {
  color: #8a8a8a;
}

.filters .hidden-count {
  gap: 3px;
  width: 62px;
  color: #c4c4c4;
}

.filters .hidden-count svg {
  width: 21px;
  height: 16px;
}

.browser {
  display: flex;
  flex: 1;
  min-height: 0;
}

.tree {
  width: 198px;
  margin: 0;
  padding: 0;
  list-style: none;
  overflow: hidden;
  font-size: 19px;
}

.tree li {
  display: flex;
  align-items: center;
  height: 24px;
  padding-left: 6px;
  font-weight: 700;
  white-space: nowrap;
}

.tree li.child {
  padding-left: 28px;
  font-weight: 400;
}

.tree li.gap {
  margin-top: 23px;
}

.tree li.selected {
  background: #4d4d4d;
}

.tree svg {
  width: 20px;
  height: 20px;
  margin: 0 5px 0 8px;
}

.tree .child svg {
  margin: 0 5px 0 6px;
}

.scrollbar {
  display: flex;
  flex-direction: column;
  align-items: center;
  width: 20px;
  padding: 8px 0 7px;
  border-left: 1px solid #323232;
  background: #343434;
}

.scrollbar .up,
.scrollbar .down {
  border: 5px solid transparent;
  border-bottom: 7px solid #c4c4c4;
  border-top: 0;
}

.scrollbar .down {
  margin-top: auto;
  border-top: 7px solid #c4c4c4;
  border-bottom: 0;
}

.thumb {
  width: 14px;
  height: 152px;
  margin-top: 9px;
  border-radius: 7px;
  background: #5f5f5f;
}

.assets {
  display: flex;
  flex: 1;
  flex-direction: column;
  min-width: 0;
  border-left: 1px solid #202020;
  background: #333;
}

.crumb {
  height: 31px;
  padding: 2px 6px;
  background: #3f3f3f;
  color: #c4c4c4;
  font-size: 19px;
  font-weight: 600;
}

.tiles {
  display: flex;
  flex: 1;
  gap: 10px;
  padding: 37px 19px;
}

figure {
  display: flex;
  flex-direction: column;
  align-items: center;
  gap: 20px;
  width: 120px;
  margin: 0;
  font-size: 15px;
}

figure svg {
  width: 84px;
  height: 71px;
}

.zoom {
  display: flex;
  align-items: center;
  justify-content: flex-end;
  height: 31px;
  padding-right: 25px;
  background: #3f3f3f;
}

.zoom input {
  width: 82px;
  height: 15px;
  appearance: none;
}

.zoom input::-webkit-slider-runnable-track {
  height: 3px;
  background: #5e5e5e;
}

.zoom input::-webkit-slider-thumb {
  width: 15px;
  height: 15px;
  margin-top: -6px;
  border-radius: 50%;
  background: #999;
  appearance: none;
}

/* status bar */
.status {
  display: flex;
  align-items: center;
  height: 32px;
  padding-left: 5px;
  color: #dfb112;
  font-size: 19px;
}

.warn {
  width: 20px;
  height: 19px;
  margin-right: 5px;
}

.status-icons {
  display: flex;
  align-self: stretch;
  margin-left: auto;
  padding-top: 3px;
}

.status-icons button {
  display: grid;
  place-items: center;
  width: 39px;
  padding-right: 2px;
  border-left: 2px solid #262626;
}

.status-icons svg {
  width: 21px;
  height: 21px;
  margin-top: 3px;
}

/* popup menus */
.menu {
  position: absolute;
  top: 422px;
  left: 242px;
  width: 407px;
  border: 3px solid #e6e6e6;
  border-radius: 6px;
  background: #f9f9f9;
  box-shadow: 0 4px 12px rgba(0, 0, 0, 0.25);
  color: #000;
}

.menu.submenu {
  top: 1072px;
  left: 643px;
  width: 353px;
}

.menu button {
  display: flex;
  align-items: center;
  justify-content: space-between;
  width: calc(100% - 10px);
  height: 35px;
  margin: 0 5px;
  padding: 0 14px 2px 48px;
  border-radius: 5px;
  text-align: left;
}

.menu button.hover {
  background: #efefef;
}

.menu button:disabled {
  color: #9d9d9d;
}

.menu hr {
  height: 1px;
  margin: 5px 10px;
  border: 0;
  background: #d5d5d5;
}

.menu svg {
  width: 8px;
  height: 12px;
}
</style>
